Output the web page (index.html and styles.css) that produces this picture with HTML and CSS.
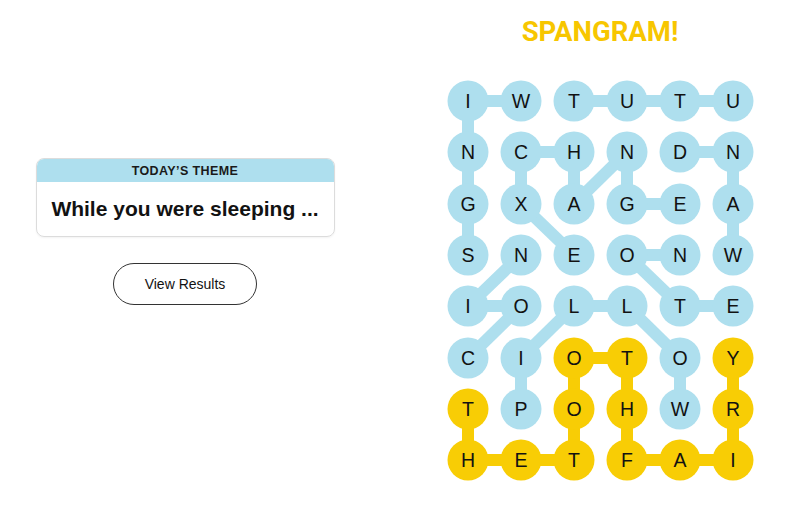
FILE: index.html
```html
<!DOCTYPE html>
<html>
<head>
<meta charset="utf-8">
<link rel="stylesheet" href="styles.css">
</head>
<body>
<div class="app">
  <section class="left">
    <div class="card">
      <div class="card-head">TODAY’S THEME</div>
      <div class="card-body">While you were sleeping ...</div>
    </div>
    <button class="results">View Results</button>
  </section>
  <section class="right">
    <h1 class="title">SPANGRAM!</h1>
    <svg class="board" width="307" height="401" viewBox="0 0 307 401">
      <g class="ln-b">
        <line x1="21" y1="21" x2="74" y2="21"/>
        <line x1="127" y1="21" x2="286" y2="21"/>
        <line x1="21" y1="21" x2="21" y2="175"/>
        <line x1="74" y1="72" x2="127" y2="72"/>
        <line x1="74" y1="72" x2="74" y2="124"/>
        <line x1="127" y1="72" x2="127" y2="124"/>
        <line x1="127" y1="124" x2="180" y2="72"/>
        <line x1="180" y1="72" x2="180" y2="124"/>
        <line x1="180" y1="124" x2="233" y2="124"/>
        <line x1="233" y1="72" x2="286" y2="72"/>
        <line x1="286" y1="72" x2="286" y2="175"/>
        <line x1="74" y1="124" x2="127" y2="175"/>
        <line x1="180" y1="175" x2="233" y2="175"/>
        <line x1="180" y1="175" x2="233" y2="226"/>
        <line x1="233" y1="226" x2="286" y2="226"/>
        <line x1="74" y1="175" x2="21" y2="226"/>
        <line x1="21" y1="226" x2="74" y2="226"/>
        <line x1="74" y1="226" x2="21" y2="278"/>
        <line x1="127" y1="226" x2="180" y2="226"/>
        <line x1="127" y1="226" x2="74" y2="278"/>
        <line x1="74" y1="278" x2="74" y2="329"/>
        <line x1="180" y1="226" x2="233" y2="278"/>
        <line x1="233" y1="278" x2="233" y2="329"/>
      </g>
      <g class="ln-y">
        <polyline points="21,329 21,380 127,380 127,278 180,278 180,380 286,380 286,278"/>
      </g>
      <g class="c-b">
        <circle cx="21" cy="21" r="20.5"/><circle cx="74" cy="21" r="20.5"/><circle cx="127" cy="21" r="20.5"/><circle cx="180" cy="21" r="20.5"/><circle cx="233" cy="21" r="20.5"/><circle cx="286" cy="21" r="20.5"/>
        <circle cx="21" cy="72" r="20.5"/><circle cx="74" cy="72" r="20.5"/><circle cx="127" cy="72" r="20.5"/><circle cx="180" cy="72" r="20.5"/><circle cx="233" cy="72" r="20.5"/><circle cx="286" cy="72" r="20.5"/>
        <circle cx="21" cy="124" r="20.5"/><circle cx="74" cy="124" r="20.5"/><circle cx="127" cy="124" r="20.5"/><circle cx="180" cy="124" r="20.5"/><circle cx="233" cy="124" r="20.5"/><circle cx="286" cy="124" r="20.5"/>
        <circle cx="21" cy="175" r="20.5"/><circle cx="74" cy="175" r="20.5"/><circle cx="127" cy="175" r="20.5"/><circle cx="180" cy="175" r="20.5"/><circle cx="233" cy="175" r="20.5"/><circle cx="286" cy="175" r="20.5"/>
        <circle cx="21" cy="226" r="20.5"/><circle cx="74" cy="226" r="20.5"/><circle cx="127" cy="226" r="20.5"/><circle cx="180" cy="226" r="20.5"/><circle cx="233" cy="226" r="20.5"/><circle cx="286" cy="226" r="20.5"/>
        <circle cx="21" cy="278" r="20.5"/><circle cx="74" cy="278" r="20.5"/><circle cx="233" cy="278" r="20.5"/>
        <circle cx="74" cy="329" r="20.5"/><circle cx="233" cy="329" r="20.5"/>
      </g>
      <g class="c-y">
        <circle cx="127" cy="278" r="20.5"/><circle cx="180" cy="278" r="20.5"/><circle cx="286" cy="278" r="20.5"/>
        <circle cx="21" cy="329" r="20.5"/><circle cx="127" cy="329" r="20.5"/><circle cx="180" cy="329" r="20.5"/><circle cx="286" cy="329" r="20.5"/>
        <circle cx="21" cy="380" r="20.5"/><circle cx="74" cy="380" r="20.5"/><circle cx="127" cy="380" r="20.5"/><circle cx="180" cy="380" r="20.5"/><circle cx="233" cy="380" r="20.5"/><circle cx="286" cy="380" r="20.5"/>
      </g>
      <g class="lt">
        <text x="21" y="28">I</text><text x="74" y="28">W</text><text x="127" y="28">T</text><text x="180" y="28">U</text><text x="233" y="28">T</text><text x="286" y="28">U</text>
        <text x="21" y="79">N</text><text x="74" y="79">C</text><text x="127" y="79">H</text><text x="180" y="79">N</text><text x="233" y="79">D</text><text x="286" y="79">N</text>
        <text x="21" y="131">G</text><text x="74" y="131">X</text><text x="127" y="131">A</text><text x="180" y="131">G</text><text x="233" y="131">E</text><text x="286" y="131">A</text>
        <text x="21" y="182">S</text><text x="74" y="182">N</text><text x="127" y="182">E</text><text x="180" y="182">O</text><text x="233" y="182">N</text><text x="286" y="182">W</text>
        <text x="21" y="233">I</text><text x="74" y="233">O</text><text x="127" y="233">L</text><text x="180" y="233">L</text><text x="233" y="233">T</text><text x="286" y="233">E</text>
        <text x="21" y="285">C</text><text x="74" y="285">I</text><text x="127" y="285">O</text><text x="180" y="285">T</text><text x="233" y="285">O</text><text x="286" y="285">Y</text>
        <text x="21" y="336">T</text><text x="74" y="336">P</text><text x="127" y="336">O</text><text x="180" y="336">H</text><text x="233" y="336">W</text><text x="286" y="336">R</text>
        <text x="21" y="387">H</text><text x="74" y="387">E</text><text x="127" y="387">T</text><text x="180" y="387">F</text><text x="233" y="387">A</text><text x="286" y="387">I</text>
      </g>
    </svg>
  </section>
</div>
</body>
</html>
```

FILE: styles.css
```css
html, body {
  margin: 0;
  padding: 0;
  background: #ffffff;
}

body {
  font-family: "Liberation Sans", Arial, sans-serif;
  color: #121212;
}

.app {
  display: flex;
  width: 800px;
  height: 527px;
}

.left {
  width: 370px;
  display: flex;
  flex-direction: column;
  align-items: center;
  padding-top: 158px;
  box-sizing: border-box;
}

.card {
  width: 299px;
  border: 1px solid #dcdcdc;
  border-radius: 8px;
  overflow: hidden;
  box-sizing: border-box;
  box-shadow: 0 1px 2px rgba(0, 0, 0, 0.05);
}

.card-head {
  background: #aedfee;
  height: 23px;
  line-height: 24px;
  text-align: center;
  font-size: 12.5px;
  font-weight: 700;
  letter-spacing: 0.4px;
  color: #1a1a1a;
}

.card-body {
  height: 54px;
  line-height: 54px;
  text-align: center;
  font-size: 21px;
  font-weight: 700;
  color: #121212;
}

.results {
  margin-top: 26px;
  width: 144px;
  height: 42px;
  border: 1px solid #333333;
  border-radius: 21px;
  background: #ffffff;
  font-family: "Liberation Sans", Arial, sans-serif;
  font-size: 14px;
  color: #121212;
  padding: 0;
}

.right {
  flex: 1;
  padding-left: 30px;
  display: flex;
  flex-direction: column;
  align-items: center;
}

.title {
  margin: 17px 0 0 0;
  font-family: Roboto, "Liberation Sans", sans-serif;
  font-size: 27.5px;
  line-height: 30px;
  font-weight: 700;
  color: #f7c600;
  letter-spacing: 0;
}

.board {
  display: block;
  margin-top: 33px;
}

.ln-b {
  stroke: #aedfee;
  stroke-width: 12;
  fill: none;
}

.ln-y {
  stroke: #f8cd05;
  stroke-width: 12;
  fill: none;
}

.c-b {
  fill: #aedfee;
}

.c-y {
  fill: #f8cd05;
}

.lt {
  font-family: "Liberation Sans", Arial, sans-serif;
  font-size: 19.5px;
  fill: #121212;
  text-anchor: middle;
}
```
